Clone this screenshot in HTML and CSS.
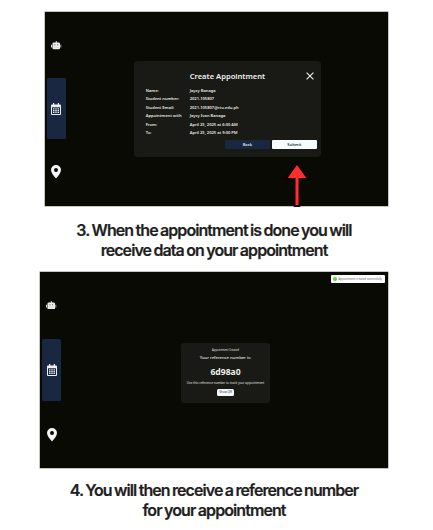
FILE: index.html
```
<!DOCTYPE html>
<html lang="en">
<head>
<meta charset="utf-8">
<title>Appointment guide</title>
<link rel="stylesheet" href="styles.css">
</head>
<body>
<svg class="defs" width="0" height="0" aria-hidden="true">
  <symbol id="robot" viewBox="0 0 22 18">
    <path fill="#eee" d="M10 0h2v3h4a3 3 0 0 1 3 3v9a3 3 0 0 1-3 3H6a3 3 0 0 1-3-3V6a3 3 0 0 1 3-3h4zM0 8h2v6H0zM20 8h2v6h-2z"/>
    <path fill="#77776f" d="M7 7h2.300v2.300H7zM12.700 7H15v2.300h-2.300zM6.500 13.500h2v1h-2zM10 13.500h2v1h-2zM13.500 13.500h2v1h-2z"/>
  </symbol>
  <symbol id="calendar" viewBox="0 0 20 24">
    <path fill="#eef1f4" fill-rule="evenodd" d="M4 0h2.500v3h7V0H16v3h2a2 2 0 0 1 2 2v17a2 2 0 0 1-2 2H2a2 2 0 0 1-2-2V5a2 2 0 0 1 2-2h2zM2 8.500V22h16V8.500z"/>
    <path fill="#dfe4ea" d="M4 10.500h3v2.500H4zM8.500 10.500h3v2.500h-3zM13 10.500h3v2.500h-3zM4 14h3v2.500H4zM8.500 14h3v2.500h-3zM13 14h3v2.500h-3zM4 17.500h3V20H4zM8.500 17.500h3V20h-3zM13 17.500h3V20h-3z"/>
  </symbol>
  <symbol id="pin" viewBox="0 0 20 27">
    <path fill="#f4f4f4" fill-rule="evenodd" d="M10 0a10 10 0 0 1 10 10c0 6-6 12-10 17C6 22 0 16 0 10A10 10 0 0 1 10 0zm0 6a4 4 0 1 0 0 8 4 4 0 0 0 0-8z"/>
  </symbol>
</svg>
<main class="page">
  <section class="screen screen-form">
    <nav class="rail">
      <div class="item"><svg class="robot"><use href="#robot"/></svg></div>
      <div class="item active"><svg class="calendar"><use href="#calendar"/></svg></div>
      <div class="item"><svg class="pin"><use href="#pin"/></svg></div>
    </nav>
    <div class="dialog">
      <header class="head">
        <h1 class="title">Create Appointment</h1>
        <svg class="close" viewBox="0 0 8 8"><path d="M.6.600 7.400 7.400M7.400.600.600 7.400" stroke="#eee" stroke-width="1.100" fill="none"/></svg>
      </header>
      <dl class="fields">
        <dt>Name:</dt><dd>Jaycy Banaga</dd>
        <dt>Student number:</dt><dd>2021-105807</dd>
        <dt>Student Email:</dt><dd>2021-105807@rtu.edu.ph</dd>
        <dt>Appointment with</dt><dd>Jaycy Ivan Banaga</dd>
        <dt>From:</dt><dd>April 25, 2025 at 6:00 AM</dd>
        <dt>To:</dt><dd>April 25, 2025 at 9:00 PM</dd>
      </dl>
      <div class="actions"><button class="btn back">Back</button><button class="btn submit">Submit</button></div>
    </div>
    <svg class="arrow" viewBox="0 0 28 48"><path d="M14 1 27.500 20H17.300V47h-6.600V20H.500z" fill="#120000"/><path d="M14 5 23.300 18H15.500V45h-3V18H4.700z" fill="#ff2c30"/></svg>
  </section>
  <p class="caption first"><span class="l1">3. When the appointment is done you will</span><span class="l2">receive data on your appointment</span></p>
  <section class="screen screen-result">
    <nav class="rail">
      <div class="item"><svg class="robot"><use href="#robot"/></svg></div>
      <div class="item active"><svg class="calendar"><use href="#calendar"/></svg></div>
      <div class="item"><svg class="pin"><use href="#pin"/></svg></div>
    </nav>
    <div class="result">
      <p class="created">Appointment Created</p>
      <p class="lead">Your reference number is:</p>
      <p class="code">6d98a0</p>
      <p class="hint">Use this reference number to track your appointment</p>
      <button class="show">Show QR</button>
    </div>
    <div class="toast"><i class="dot"></i><span>Appointment created successfully</span></div>
  </section>
  <p class="caption second"><span class="l3">4. You will then receive a reference number</span><span class="l4">for your appointment</span></p>
</main>
</body>
</html>
```

FILE: styles.css
```
* { box-sizing: border-box; }
body { margin: 0; background: #fff; font-family: "Noto Sans", sans-serif; }
h1, p, dl, dd { margin: 0; }
button { border: 0; padding: 0; font-family: inherit; }
.defs { position: absolute; }
.page { width: 433px; height: 530px; padding-top: 12px; overflow: hidden; }
.screen { position: relative; display: flex; background: #090a04; color: #e6e6e3; box-shadow: 0 0 0 .5px #8c8c86; }
.screen-form { width: 343px; height: 193.500px; margin-left: 45px; }
.screen-result { width: 348px; height: 196px; margin-left: 40px; margin-top: 11.500px; }
.rail { width: 20.600px; padding-left: 2px; display: flex; flex-direction: column; }
.item { height: 61px; display: flex; align-items: center; justify-content: center; border-radius: 1.500px; }
.active { background: #1a2740; }
.screen-form .rail { padding-top: 3px; gap: 2px; }
.screen-result .rail { padding-top: 2px; gap: 3px; width: 21px; }
.screen-result .item { height: 62px; }
.robot { width: 10.500px; height: 8.500px; }
.calendar { width: 10px; height: 12px; }
.pin { width: 10px; height: 13.500px; }

.dialog { width: 187px; height: 96.500px; margin: 48.500px 0 0 68.600px; border-radius: 4px; background: #191a15; padding: 9px 4px 0 11.500px; }
.head { display: flex; align-items: center; height: 12px; padding: 0 3.500px 0 44px; justify-content: space-between; }
.title { font-size: 7.600px; line-height: 12px; font-weight: 600; white-space: nowrap; color: #f0f0ee; }
.close { width: 8px; height: 8px; }
.fields { display: grid; grid-template-columns: 44px 1fr; grid-auto-rows: 8.550px; margin-top: 5.200px; font-size: 4.050px; line-height: 8.550px; font-weight: 600; white-space: nowrap; }
.actions { display: flex; justify-content: flex-end; gap: 1.500px; margin-top: 2px; }
.btn { width: 45.500px; height: 9px; border-radius: 1px; font-size: 4.100px; line-height: 9px; font-weight: 600; }
.back { background: #1a2740; color: #dfe4ea; }
.submit { background: #f6fbfc; color: #30384a; }
.arrow { position: absolute; left: 238px; top: 148px; width: 28px; height: 48px; }

.caption { font-family: Inter, sans-serif; font-weight: 600; font-size: 16px; line-height: 20.500px; color: #1f1f1f; height: 41px; white-space: nowrap; text-align: center; width: 428px; word-spacing: -.700px; -webkit-text-stroke: .2px #1f1f1f; }
.caption span { display: block; }
.first { margin-top: 14px; }
.second { margin-top: 11.500px; }
.l1 { letter-spacing: -.935px; }
.l2 { letter-spacing: -.940px; }
.l3 { letter-spacing: -.943px; }
.l4 { letter-spacing: -.910px; }

.result { width: 89px; height: 60px; margin: 71px 0 0 120px; border-radius: 3px; background: #191a15; display: flex; flex-direction: column; align-items: center; white-space: nowrap; }
.created { font-size: 2.650px; line-height: 4px; margin-top: 4.500px; }
.lead { font-size: 4.150px; line-height: 6px; margin-top: 3.700px; font-weight: 500; }
.code { font-size: 8.600px; line-height: 12px; margin-top: 4.600px; font-weight: 700; color: #eee; }
.hint { font-size: 3.080px; line-height: 5px; margin-top: 3.300px; }
.show { width: 17px; height: 7px; margin-top: 3px; border-radius: 1.500px; background: #f6f9fc; color: #333b4d; font-size: 3px; line-height: 7px; }
.toast { position: absolute; left: 291px; top: 3px; width: 54px; height: 8px; background: #fff; border-radius: 1px; display: flex; align-items: center; padding-left: 2px; gap: 2px; color: #666; font-size: 2.750px; line-height: 8px; white-space: nowrap; }
.dot { width: 3.500px; height: 3.500px; border-radius: 50%; background: #61d345; }
```
